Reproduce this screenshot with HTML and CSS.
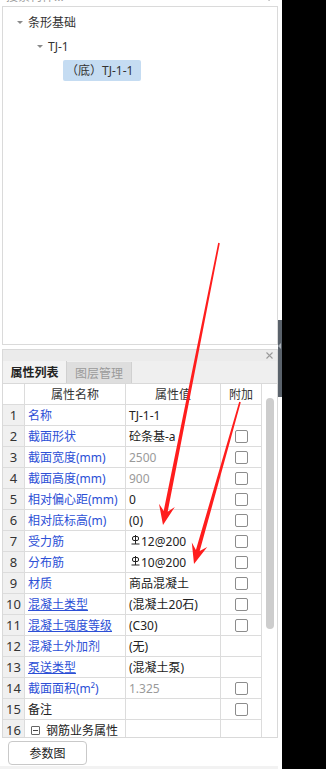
FILE: index.html
```html
<!DOCTYPE html>
<html lang="zh-CN">
<head>
  <meta charset="UTF-8" />
  <meta name="viewport" content="width=device-width, initial-scale=1.0"/>
  <title>构件属性</title>
  <link rel="stylesheet" href="styles.css">
</head>
<body>
  <div class="screen">
    <div class="main">
      <div class="search">
        <span>搜索构件...</span>
        <svg class="search-icon" width="9" height="9" viewBox="0 0 9 9"><circle cx="3.5" cy="3.5" r="2.8" fill="none" stroke="#999" stroke-width="1"/><line x1="5.6" y1="5.6" x2="8.5" y2="8.5" stroke="#999" stroke-width="1.2"/></svg>
      </div>

      <div class="tree">
        <div class="node lvl1"><span class="caret"></span>条形基础</div>
        <div class="node lvl2"><span class="caret"></span>TJ-1</div>
        <div class="node lvl3"><span class="sel">（底）TJ-1-1</span></div>
      </div>

      <div class="props">
        <div class="props-title">
          <svg width="7" height="7" viewBox="0 0 7 7"><path d="M0.5 0.5L6.5 6.5M6.5 0.5L0.5 6.5" stroke="#9a9a9a" stroke-width="1.1"/></svg>
        </div>
        <div class="tabs">
          <div class="tab active">属性列表</div>
          <div class="tab">图层管理</div>
        </div>
        <div class="grid-wrap">
          <div class="grid">
            <div class="row head">
              <div class="cell num"></div>
              <div class="cell">属性名称</div>
              <div class="cell">属性值</div>
              <div class="cell">附加</div>
            </div>
            <div class="row"><div class="cell num">1</div><div class="cell name">名称</div><div class="cell val">TJ-1-1</div><div class="cell add"></div></div>
            <div class="row"><div class="cell num">2</div><div class="cell name">截面形状</div><div class="cell val">砼条基-a</div><div class="cell add"><span class="chk"></span></div></div>
            <div class="row"><div class="cell num">3</div><div class="cell name">截面宽度(mm)</div><div class="cell val muted">2500</div><div class="cell add"><span class="chk"></span></div></div>
            <div class="row"><div class="cell num">4</div><div class="cell name">截面高度(mm)</div><div class="cell val muted">900</div><div class="cell add"><span class="chk"></span></div></div>
            <div class="row"><div class="cell num">5</div><div class="cell name">相对偏心距(mm)</div><div class="cell val">0</div><div class="cell add"><span class="chk"></span></div></div>
            <div class="row"><div class="cell num">6</div><div class="cell name">相对底标高(m)</div><div class="cell val">(0)</div><div class="cell add"><span class="chk"></span></div></div>
            <div class="row"><div class="cell num">7</div><div class="cell name">受力筋</div><div class="cell val"><svg class="bar" width="9" height="10" viewBox="0 0 9 10"><rect x="1.5" y="1.5" width="6" height="4" rx="1.5" fill="none" stroke="#222"/><path d="M4.5 0V9M0.5 9H8.5" stroke="#222"/></svg>12@200</div><div class="cell add"><span class="chk"></span></div></div>
            <div class="row"><div class="cell num">8</div><div class="cell name">分布筋</div><div class="cell val"><svg class="bar" width="9" height="10" viewBox="0 0 9 10"><rect x="1.5" y="1.5" width="6" height="4" rx="1.5" fill="none" stroke="#222"/><path d="M4.5 0V9M0.5 9H8.5" stroke="#222"/></svg>10@200</div><div class="cell add"><span class="chk"></span></div></div>
            <div class="row"><div class="cell num">9</div><div class="cell name">材质</div><div class="cell val">商品混凝土</div><div class="cell add"><span class="chk"></span></div></div>
            <div class="row"><div class="cell num">10</div><div class="cell name link">混凝土类型</div><div class="cell val">(混凝土20石)</div><div class="cell add"><span class="chk"></span></div></div>
            <div class="row"><div class="cell num">11</div><div class="cell name link">混凝土强度等级</div><div class="cell val">(C30)</div><div class="cell add"><span class="chk"></span></div></div>
            <div class="row"><div class="cell num">12</div><div class="cell name">混凝土外加剂</div><div class="cell val">(无)</div><div class="cell add"></div></div>
            <div class="row"><div class="cell num">13</div><div class="cell name link">泵送类型</div><div class="cell val">(混凝土泵)</div><div class="cell add"></div></div>
            <div class="row"><div class="cell num">14</div><div class="cell name">截面面积(m²)</div><div class="cell val muted">1.325</div><div class="cell add"><span class="chk"></span></div></div>
            <div class="row"><div class="cell num">15</div><div class="cell name plain">备注</div><div class="cell val"></div><div class="cell add"><span class="chk"></span></div></div>
            <div class="row"><div class="cell num">16</div><div class="cell name plain group"><span class="fold"></span>钢筋业务属性</div><div class="cell val"></div><div class="cell add"></div></div>
          </div>
          <div class="vscroll"><div class="thumb"></div></div>
        </div>
      </div>

      <div class="footer">
        <button class="btn">参数图</button>
      </div>
      <div class="statusbar"></div>
    </div>

    <div class="splitter"><div class="grip"><span class="grip-handle"></span></div></div>
    <div class="dark"></div>

    <svg class="marks" width="326" height="769" viewBox="0 0 326 769">
      <polygon fill="#ff1d1d" points="219.8,243.2 167.7,511.7 174.8,507 163,525 159,503.8 163.7,510.9 218.2,242.8"/>
      <polygon fill="#ff1d1d" points="240.8,402.2 199.7,551.1 207.2,547 194,564 191.8,542.6 195.9,550 239.2,401.8"/>
    </svg>
  </div>
</body>
</html>
```

FILE: styles.css
```css
* {
  box-sizing: border-box;
}

body {
  margin: 0;
  font-family: "Noto Sans", "Noto Sans CJK SC", sans-serif;
  font-size: 12px;
  color: #333;
  background: #fff;
}

.screen {
  position: relative;
  display: flex;
  height: 769px;
  overflow: hidden;
}

.main {
  width: 278px;
  display: flex;
  flex-direction: column;
}

/* search box, mostly scrolled out of view */
.search {
  height: 20px;
  margin-top: -14px;
  padding: 0 8px 2px 6px;
  display: flex;
  align-items: flex-end;
  justify-content: space-between;
  line-height: 14px;
  color: #a0a0a0;
}

.search-icon {
  margin-bottom: 3px;
}

.tree {
  margin-left: 2px;
  width: 276px;
  height: 339px;
  border: 1px solid #dadada;
  padding-top: 3px;
}

.node {
  height: 24px;
  display: flex;
  align-items: center;
  color: #333;
}

.lvl1 {
  padding-left: 14px;
}

.lvl2 {
  padding-left: 34px;
}

.lvl3 {
  padding-left: 60px;
}

.caret {
  width: 0;
  height: 0;
  border-left: 3px solid transparent;
  border-right: 3px solid transparent;
  border-top: 3px solid #8a8a8a;
  margin-right: 5px;
}

.sel {
  height: 21px;
  line-height: 21px;
  padding: 0 8px 0 3px;
  background: #c5dcf2;
  border-radius: 2px;
}

/* property panel */
.props {
  margin: 4px 0 0 2px;
  width: 276px;
  height: 389px;
  border: 1px solid #d9d9d9;
  display: flex;
  flex-direction: column;
}

.props-title {
  height: 11px;
  background: #ebebeb;
  display: flex;
  justify-content: flex-end;
  align-items: center;
  padding-right: 4px;
}

.tabs {
  height: 22px;
  background: #efefef;
  display: flex;
}

.tab {
  width: 65px;
  border-right: 1px solid #d0d0d0;
  display: flex;
  align-items: center;
  justify-content: center;
  color: #9a9a9a;
  background: #dedede;
  margin-top: 1px;
}

.tab.active {
  width: 64px;
  margin-top: 0;
  background: #f2f2f2;
  color: #222;
  font-weight: bold;
}

.grid-wrap {
  flex: 1;
  display: flex;
  border-top: 1px solid #d9d9d9;
  overflow: hidden;
}

.grid {
  width: 259px;
}

.row {
  display: grid;
  grid-template-columns: 22px 101px 95px 41px;
  height: 21px;
}

.cell {
  border-right: 1px solid #dcdcdc;
  border-bottom: 1px solid #dcdcdc;
  display: flex;
  align-items: center;
  white-space: nowrap;
  overflow: hidden;
}

.head .cell {
  justify-content: center;
  color: #333;
}

.num {
  justify-content: center;
  background: #f0f0f0;
  font-size: 13px;
  color: #333;
}

.head .num {
  background: #fff;
}

.name {
  padding-left: 3px;
  color: #2c4fd6;
}

.name.link {
  text-decoration: underline;
}

.name.plain {
  color: #222;
}

.group {
  padding-left: 6px;
}

.fold {
  width: 9px;
  height: 9px;
  border: 1px solid #666;
  border-radius: 1px;
  margin-right: 6px;
  position: relative;
}

.fold::after {
  content: "";
  position: absolute;
  left: 1px;
  right: 1px;
  top: 3px;
  height: 1px;
  background: #444;
}

.val {
  padding-left: 3px;
  color: #222;
}

.val.muted {
  color: #9a9a9a;
}

.bar {
  margin: 0 1px 2px 2px;
}

.add {
  justify-content: center;
}

.chk {
  width: 13px;
  height: 13px;
  border: 1px solid #8c8c8c;
  border-radius: 2px;
  background: #fff;
}

.vscroll {
  width: 15px;
}

.thumb {
  margin: 14px 0 0 4px;
  width: 8px;
  height: 231px;
  border-radius: 4px;
  background: #cdcdcd;
}

.footer {
  height: 28px;
  padding: 3px 0 0 8px;
}

.btn {
  width: 79px;
  height: 24px;
  border: 1px solid #c9c9c9;
  border-radius: 4px;
  background: #fff;
  font-family: inherit;
  font-size: 12px;
  color: #222;
  padding: 0;
}

.statusbar {
  flex: 1;
  background: #f2f2f2;
}

.splitter {
  width: 4px;
}

.grip {
  margin-top: 320px;
  height: 77px;
  background: #5a626b;
  position: relative;
}

.grip-handle {
  position: absolute;
  left: 0;
  top: 23px;
  width: 0;
  height: 0;
  border-top: 3px solid transparent;
  border-bottom: 3px solid transparent;
  border-right: 3px solid #aab0b8;
}

.dark {
  flex: 1;
  background: #000;
}

/* red annotation arrows drawn over the screenshot */
.marks {
  position: absolute;
  left: 0;
  top: 0;
  pointer-events: none;
}
```
